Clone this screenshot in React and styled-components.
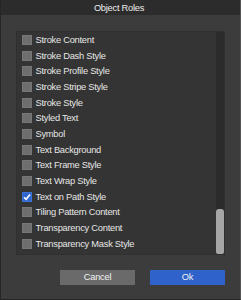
import React from 'react'
import styled, { createGlobalStyle } from 'styled-components'

const GlobalStyle = createGlobalStyle`
    html, body {
        margin: 0;
        padding: 0;
        background: #3c3c3c;
    }
    * {
        box-sizing: border-box;
    }
`

const roles = [
    { label: 'Stroke Content' },
    { label: 'Stroke Dash Style' },
    { label: 'Stroke Profile Style' },
    { label: 'Stroke Stripe Style' },
    { label: 'Stroke Style' },
    { label: 'Styled Text' },
    { label: 'Symbol' },
    { label: 'Text Background' },
    { label: 'Text Frame Style' },
    { label: 'Text Wrap Style' },
    { label: 'Text on Path Style', checked: true },
    { label: 'Tiling Pattern Content' },
    { label: 'Transparency Content' },
    { label: 'Transparency Mask Style' },
]

const Window = styled.div`
    width: 241px;
    height: 300px;
    display: flex;
    flex-direction: column;
    background: #3c3c3c;
    border-left: 1px solid #262626;
    border-right: 1px solid #555555;
    border-bottom: 1px solid #242424;
    font-family: 'Liberation Sans', Arial, sans-serif;
    font-size: 9.3px;
    letter-spacing: -0.25px;
    color: #e6e6e6;
`

const TitleBar = styled.div`
    height: 15px;
    flex: none;
    display: flex;
    align-items: center;
    justify-content: center;
    background: #2c2c2c;
    color: #ececec;
    padding-right: 3px;
`

const Body = styled.div`
    flex: 1;
    display: flex;
    flex-direction: column;
    padding: 16px 15px 12px 15px;
`

const ListPanel = styled.div`
    height: 224px;
    display: flex;
    background: #343434;
    border: 1px solid #303030;
    overflow: hidden;
`

const List = styled.div`
    flex: 1;
    padding: 0.3px 0 0 5px;
`

const Row = styled.div`
    height: 15.67px;
    display: flex;
    align-items: center;
    gap: 3.5px;
    white-space: nowrap;
`

const Box = styled.span`
    width: 10px;
    height: 10px;
    flex: none;
    display: flex;
    align-items: center;
    justify-content: center;
    background: ${(props) => (props.checked ? '#2f66d0' : '#6e6e6e')};
    border: 1px solid ${(props) => (props.checked ? '#3a72dc' : '#777777')};
`

const ScrollTrack = styled.div`
    width: 8px;
    flex: none;
    display: flex;
    flex-direction: column;
    justify-content: flex-end;
    background: #2b2b2b;
    padding: 0 0.5px 0 0;
`

const Thumb = styled.div`
    height: 45px;
    background: #a6a6a6;
    border-radius: 3px 3px 2px 2px;
`

const Footer = styled.div`
    display: flex;
    justify-content: flex-end;
    gap: 15px;
    margin-top: 15px;
`

const Button = styled.div`
    width: 75px;
    height: 14.5px;
    display: flex;
    align-items: center;
    justify-content: center;
    background: ${(props) => (props.primary ? '#2f63cb' : '#6a6a6a')};
    color: #f2f2f2;
`

const Check = () => (
    <svg width="8" height="8" viewBox="0 0 8 8">
        <path
            d="M1 4.2 L3.1 6.3 L7 1.4"
            fill="none"
            stroke="#ffffff"
            strokeWidth="1.6"
        />
    </svg>
)

const App = () => {
    return (
        <>
            <GlobalStyle />
            <Window>
                <TitleBar>Object Roles</TitleBar>
                <Body>
                    <ListPanel>
                        <List>
                            {roles.map((role) => (
                                <Row key={role.label}>
                                    <Box checked={role.checked}>
                                        {role.checked && <Check />}
                                    </Box>
                                    {role.label}
                                </Row>
                            ))}
                        </List>
                        <ScrollTrack>
                            <Thumb />
                        </ScrollTrack>
                    </ListPanel>
                    <Footer>
                        <Button>Cancel</Button>
                        <Button primary>Ok</Button>
                    </Footer>
                </Body>
            </Window>
        </>
    )
}

export default App
